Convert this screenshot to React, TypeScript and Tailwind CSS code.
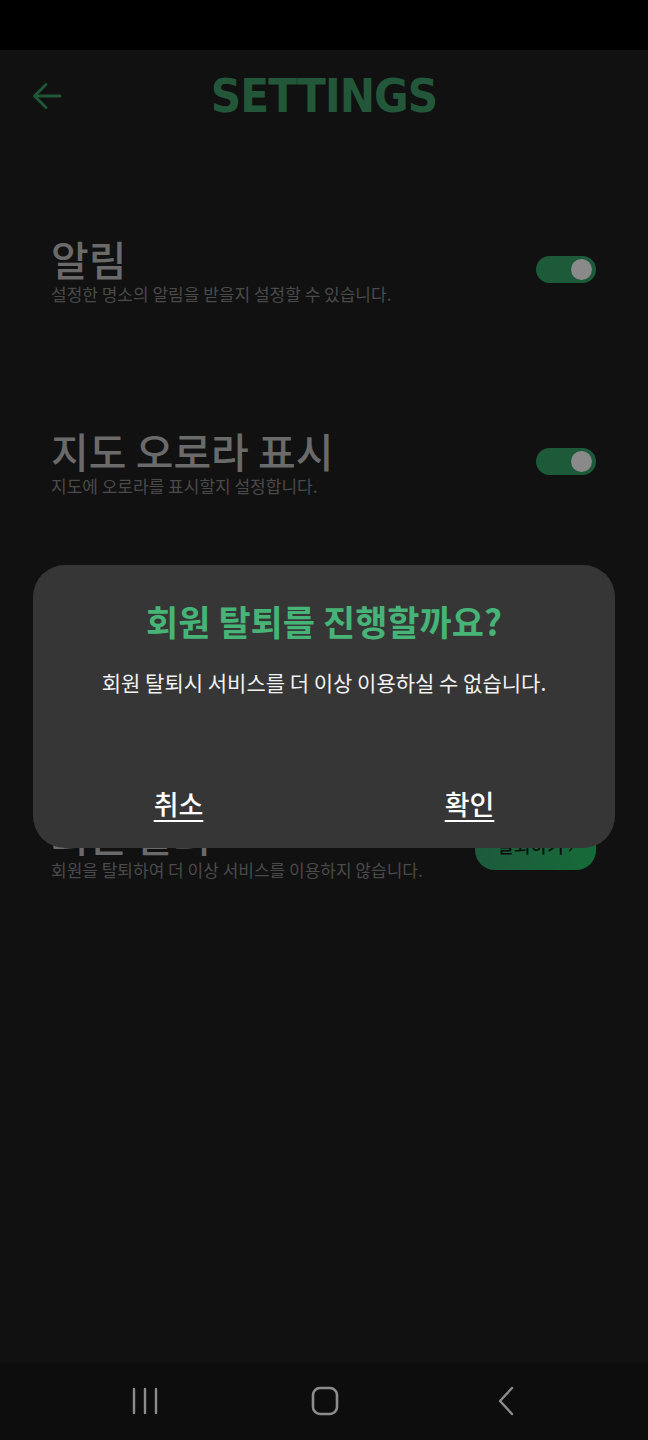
import React from 'react'

const kr = { fontFamily: '"Noto Sans CJK KR", "Noto Sans", sans-serif' }

const Toggle: React.FC = () => (
    <div className="w-[60px] h-[27px] rounded-full bg-[#1c5a3a] flex items-center justify-end pr-[4px]">
        <div className="w-[21px] h-[21px] rounded-full bg-[#8a8a8a]" />
    </div>
)

interface RowProps {
    title: string
    desc: string
    right: React.ReactNode
}

const Row: React.FC<RowProps> = ({ title, desc, right }) => (
    <div className="flex items-center justify-between pl-[51px] pr-[52px] h-[192px]">
        <div className="flex flex-col">
            <div className="text-[41px] leading-[50px] font-medium text-[#6a6a6a]">{title}</div>
            <div className="text-[17px] leading-[22px] text-[#4a4a4a]">{desc}</div>
        </div>
        {right}
    </div>
)

export default function App() {
    return (
        <div className="relative w-[648px] h-[1440px] bg-[#111111] flex flex-col overflow-hidden" style={kr}>
            <div className="h-[50px] bg-black" />

            <div className="relative h-[92px] flex items-center justify-center">
                <svg className="absolute left-[31px] top-[30px]" width="32" height="32" viewBox="0 0 32 32" fill="none">
                    <path d="M29 16H4M15 4.5L3.5 16L15 27.5" stroke="#1f5637" strokeWidth="3" strokeLinecap="round" strokeLinejoin="round" />
                </svg>
                <div
                    className="text-[47px] font-bold text-[#22573a] tracking-[-1px]"
                    style={{ fontFamily: '"DejaVu Sans Condensed", "DejaVu Sans", sans-serif' }}
                >
                    SETTINGS
                </div>
            </div>

            <div className="flex flex-col pt-[31px]">
                <Row title="알림" desc="설정한 명소의 알림을 받을지 설정할 수 있습니다." right={<Toggle />} />
                <Row title="지도 오로라 표시" desc="지도에 오로라를 표시할지 설정합니다." right={<Toggle />} />
                <Row title="로그아웃" desc="현재 계정에서 로그아웃합니다." right={<Toggle />} />
                <Row
                    title="회원 탈퇴"
                    desc="회원을 탈퇴하여 더 이상 서비스를 이용하지 않습니다."
                    right={
                        <div className="w-[121px] h-[50px] rounded-[20px] bg-gradient-to-r from-[#1d5a3c] to-[#156b39] flex items-center justify-center gap-1 text-[18px] font-medium text-[#0d0d0d]">
                            탈퇴하기
                            <span className="text-[#0d0d0d]">›</span>
                        </div>
                    }
                />
            </div>

            <div className="flex-1" />

            <div className="h-[78px] bg-[#0d0d0d] flex items-center pl-[55px] pr-[51px]">
                <div className="flex-1 flex justify-center">
                    <svg width="28" height="28" viewBox="0 0 28 28" fill="none">
                        <path d="M3 2V26M14 2V26M25 2V26" stroke="#8c8c8c" strokeWidth="2.4" strokeLinecap="round" />
                    </svg>
                </div>
                <div className="flex-1 flex justify-center">
                    <svg width="30" height="30" viewBox="0 0 30 30" fill="none">
                        <rect x="2" y="2" width="24" height="26" rx="7" stroke="#8c8c8c" strokeWidth="2.6" />
                    </svg>
                </div>
                <div className="flex-1 flex justify-center">
                    <svg width="20" height="30" viewBox="0 0 20 30" fill="none">
                        <path d="M15 2L3 15L15 28" stroke="#8c8c8c" strokeWidth="2.4" strokeLinecap="round" strokeLinejoin="round" />
                    </svg>
                </div>
            </div>

            <div className="absolute left-[33px] top-[565px] w-[582px] h-[283px] rounded-[32px] bg-[#363636] flex flex-col items-center">
                <div className="mt-[33px] text-[35px] leading-[46px] font-bold text-[#46b476]">회원 탈퇴를 진행할까요?</div>
                <div className="mt-[23px] text-[21px] leading-[30px] text-[#f2f2f2]">회원 탈퇴시 서비스를 더 이상 이용하실 수 없습니다.</div>
                <div className="mt-auto mb-[26px] w-full flex">
                    <div className="flex-1 flex justify-center">
                        <span className="text-[27px] leading-[36px] font-medium text-white underline underline-offset-[5px]">취소</span>
                    </div>
                    <div className="flex-1 flex justify-center">
                        <span className="text-[27px] leading-[36px] font-medium text-white underline underline-offset-[5px]">확인</span>
                    </div>
                </div>
            </div>
        </div>
    )
}
